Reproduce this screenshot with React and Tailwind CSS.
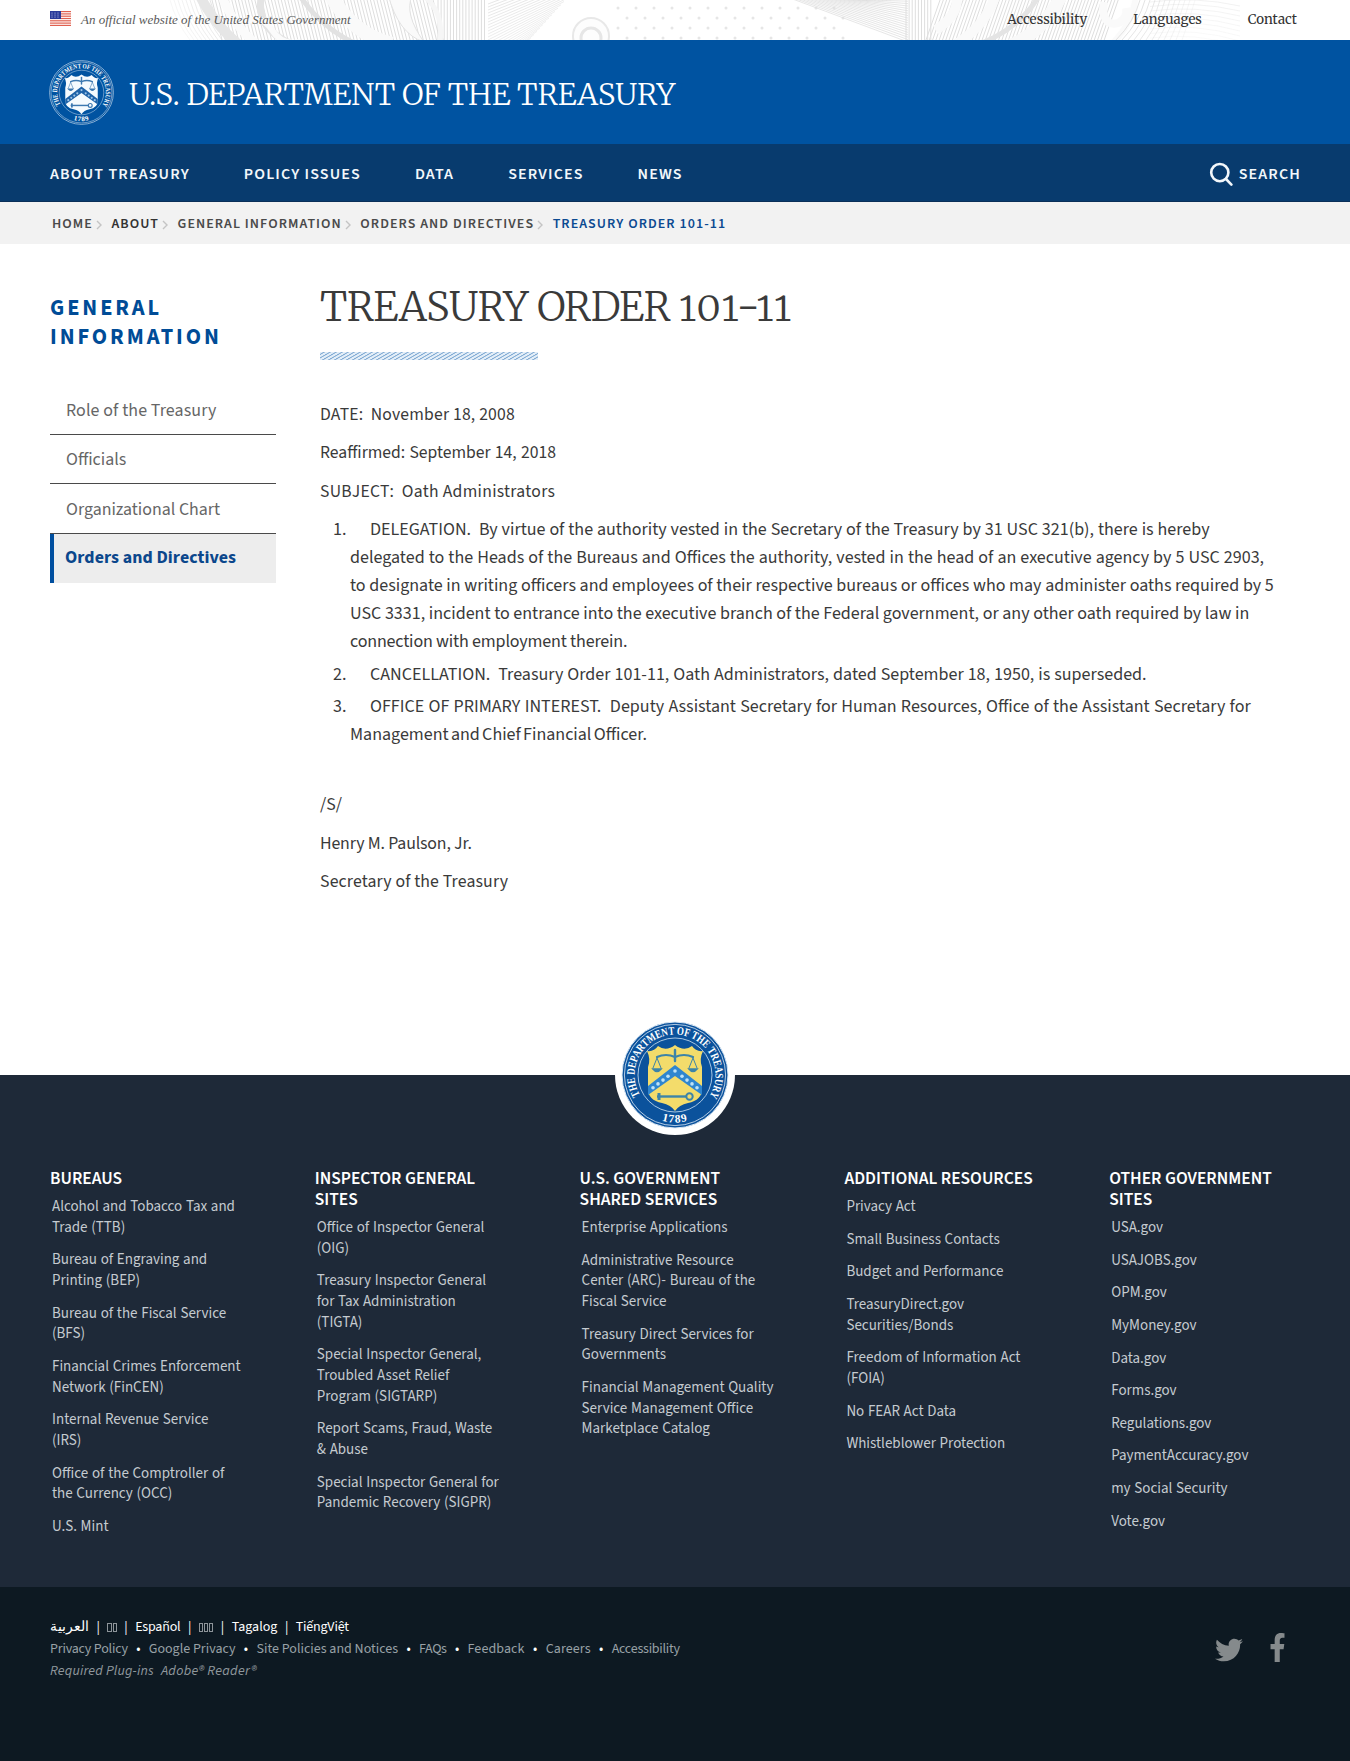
import { FaTwitter, FaFacebookF } from "react-icons/fa";

const NAV = ["ABOUT TREASURY", "POLICY ISSUES", "DATA", "SERVICES", "NEWS"];

const CRUMBS = [
  ["HOME", "text-[#4a4a4a]"],
  ["ABOUT", "text-[#333333]"],
  ["GENERAL INFORMATION", "text-[#4a4a4a]"],
  ["ORDERS AND DIRECTIVES", "text-[#4a4a4a]"],
];

/* Each order item: number, then its lines with their word spacing */
const ORDERS = [
  ["1.", [
    ["DELEGATION.\u00a0 By virtue of the authority vested in the Secretary of the Treasury by 31 USC 321(b), there is hereby", "[word-spacing:0.32px]"],
    ["delegated to the Heads of the Bureaus and Offices the authority, vested in the head of an executive agency by 5 USC 2903,", "[word-spacing:0.46px]"],
    ["to designate in writing officers and employees of their respective bureaus or offices who may administer oaths required by 5", "[word-spacing:0.05px]"],
    ["USC 3331, incident to entrance into the executive branch of the Federal government, or any other oath required by law in", ""],
    ["connection with employment therein.", "tracking-[-0.17px]"],
  ]],
  ["2.", [["CANCELLATION.\u00a0 Treasury Order 101-11, Oath Administrators, dated September 18, 1950, is superseded.", "[word-spacing:0.4px]"]]],
  ["3.", [
    ["OFFICE OF PRIMARY INTEREST.\u00a0 Deputy Assistant Secretary for Human Resources, Office of the Assistant Secretary for", "[word-spacing:0.65px]"],
    ["Management and Chief Financial Officer.", "[word-spacing:-1.3px]"],
  ]],
];

const COLUMNS = [
  {
    title: "BUREAUS",
    links: [
      "Alcohol and Tobacco Tax and\nTrade (TTB)",
      "Bureau of Engraving and\nPrinting (BEP)",
      "Bureau of the Fiscal Service\n(BFS)",
      "Financial Crimes Enforcement\nNetwork (FinCEN)",
      "Internal Revenue Service\n(IRS)",
      "Office of the Comptroller of\nthe Currency (OCC)",
      "U.S. Mint",
    ],
  },
  {
    title: "INSPECTOR GENERAL\nSITES",
    links: [
      "Office of Inspector General\n(OIG)",
      "Treasury Inspector General\nfor Tax Administration\n(TIGTA)",
      "Special Inspector General,\nTroubled Asset Relief\nProgram (SIGTARP)",
      "Report Scams, Fraud, Waste\n& Abuse",
      "Special Inspector General for\nPandemic Recovery (SIGPR)",
    ],
  },
  {
    title: "U.S. GOVERNMENT\nSHARED SERVICES",
    links: [
      "Enterprise Applications",
      "Administrative Resource\nCenter (ARC)- Bureau of the\nFiscal Service",
      "Treasury Direct Services for\nGovernments",
      "Financial Management Quality\nService Management Office\nMarketplace Catalog",
    ],
  },
  {
    title: "ADDITIONAL RESOURCES",
    links: [
      "Privacy Act",
      "Small Business Contacts",
      "Budget and Performance",
      "TreasuryDirect.gov\nSecurities/Bonds",
      "Freedom of Information Act\n(FOIA)",
      "No FEAR Act Data",
      "Whistleblower Protection",
    ],
  },
  {
    title: "OTHER GOVERNMENT\nSITES",
    links: [
      "USA.gov",
      "USAJOBS.gov",
      "OPM.gov",
      "MyMoney.gov",
      "Data.gov",
      "Forms.gov",
      "Regulations.gov",
      "PaymentAccuracy.gov",
      "my Social Security",
      "Vote.gov",
    ],
  },
];

const POLICIES = [
  ["Privacy Policy", "tracking-[-0.2px]"],
  ["Google Privacy", ""],
  ["Site Policies and Notices", ""],
  ["FAQs", "tracking-[-0.4px]"],
  ["Feedback", "tracking-[0.1px]"],
  ["Careers", "tracking-[0.1px]"],
  ["Accessibility", "tracking-[-0.25px]"],
];

/* Engraved banknote ornament behind the top bar */
function Guilloche() {
  const range = (n) => Array.from({ length: n }, (_, i) => i);
  return (
    <svg className="absolute inset-0" width="1350" height="40" viewBox="0 0 1350 40" fill="none" stroke="#dedede" strokeWidth="1">
      {range(11).map((i) => (
        <path key={"a" + i} d={`M${170 + i * 4} 0 Q ${176 + i * 4} 22 ${190 + i * 4} 40`} opacity={0.25 + i * 0.05} />
      ))}
      {range(68).map((i) => (
        <path key={"b" + i} d={`M${212 + i * 3.3} 0 L ${222 + i * 3.3} 40`} />
      ))}
      {range(16).map((i) => (
        <path key={"c" + i} d={`M${438 + i * 3.1} 0 V40`} />
      ))}
      <path d="M200 -4 Q214 24 238 44" stroke="#e6e6e6" strokeWidth="10" />
      <path d="M222 -4 Q232 24 256 44" stroke="#fbfbfb" strokeWidth="9" />
      <path d="M262 -6 C256 18 268 34 292 44" stroke="#e4e4e4" strokeWidth="7" />
      <path d="M246 22 Q262 14 272 30 T300 42" stroke="#fbfbfb" strokeWidth="6" />
      <path d="M330 -6 Q352 34 392 44" stroke="#fafafa" strokeWidth="14" />
      <path d="M300 -4 Q320 26 352 42" stroke="#e2e2e2" strokeWidth="5" />
      <path d="M388 -6 Q398 34 424 42 Q404 14 412 -4" fill="#fafafa" stroke="#e2e2e2" />
      <path d="M424 -4 Q444 12 440 42" stroke="#f6f6f6" strokeWidth="5" />
      {range(24).map((i) => (
        <path key={"d" + i} d={`M488 ${4 + i * 3} L ${600 - i * 3} ${-38 + i * 3.3}`} opacity={0.75 - i * 0.015} />
      ))}
      <circle cx="591" cy="36" r="18" fill="#fdfdfd" stroke="#e8e8e8" strokeWidth="2" />
      <circle cx="591" cy="38" r="10" stroke="#e6e6e6" strokeWidth="3" />
      <g fill="#e6e6e6" stroke="none">
        {range(4).map((r) =>
          range(13).map((c) => <circle key={r + "-" + c} cx={618 + c * 18 + (r % 2) * 9} cy={8 + r * 10} r="1.5" />)
        )}
      </g>
      {range(26).map((i) => (
        <path key={"e" + i} d={`M${790 + i * 4} ${-2 + i * 0.1} L 908 ${42 - i * 2.4}`} opacity="0.75" />
      ))}
      {range(9).map((i) => (
        <path key={"f" + i} d={`M${906 + i * 3.1} 0 V40`} />
      ))}
      {range(55).map((i) => (
        <path key={"g" + i} d={`M${940 + i * 3.3} 0 L ${926 + i * 3.3} 40`} />
      ))}
      <path d="M956 -4 Q960 14 936 30" stroke="#fafafa" strokeWidth="10" />
      <path d="M996 -6 Q986 26 956 44" stroke="#fafafa" strokeWidth="10" />
      <path d="M1040 -6 Q1020 30 974 46" stroke="#e4e4e4" strokeWidth="5" />
      <path d="M1062 -6 Q1046 30 1010 46" stroke="#f9f9f9" strokeWidth="13" />
      <path d="M1104 2 C1098 34 1130 26 1126 8" stroke="#fafafa" strokeWidth="8" />
      <path d="M1136 -6 Q1134 22 1112 44" stroke="#fafafa" strokeWidth="6" />
      {range(12).map((i) => (
        <path key={"h" + i} d={`M${1140 + i * 5} 0 Q ${1134 + i * 5} 22 ${1116 + i * 6} 40`} opacity={0.9 - i * 0.06} />
      ))}
      {range(9).map((i) => (
        <path key={"k" + i} d={`M1150 ${2 + i * 4.5} Q1195 ${i * 4.5 - 4} 1240 ${6 + i * 5}`} opacity={0.4 - i * 0.03} />
      ))}
    </svg>
  );
}

function Flag() {
  return (
    <svg width="21" height="15" viewBox="0 0 21 15">
      <rect width="21" height="15" fill="#fff" />
      {[0, 1, 2, 3, 4, 5, 6].map((i) => (
        <rect key={i} y={i * 2.3} width="21" height="1.2" fill="#e0604f" />
      ))}
      <rect width="11" height="8" fill="#2a3a9a" />
      {[2, 5, 8].map((x) => [2, 4, 6].map((y) => <circle key={x + "-" + y} cx={x} cy={y} r="0.55" fill="#c9d0f0" />))}
    </svg>
  );
}

/* Treasury seal: ring lettering around a shield with scales, chevron and key */
function Seal({ size, id, ring, shield, ink, chevron, stars }) {
  return (
    <svg width={size} height={size} viewBox="-54 -54 108 108">
      <defs>
        <path id={id + "-top"} d="M-35 20.2 A40.4 40.4 0 1 1 35 20.2" />
        <path id={id + "-bottom"} d="M-30 37 A47.6 47.6 0 0 0 30 37" />
      </defs>
      <circle r="53" fill={ring} stroke="#dce9f5" strokeWidth="1" />
      <circle r="50.6" fill="none" stroke="#dce9f5" strokeWidth="0.8" />
      <circle r="37" fill={ring} stroke="#b9d3ea" strokeWidth="0.9" />
      <g fill="#fff" fontFamily="'Liberation Serif', serif" fontWeight="700" fontSize="11.5">
        <text>
          <textPath href={"#" + id + "-top"} textLength="170" lengthAdjust="spacingAndGlyphs">THE DEPARTMENT OF THE TREASURY</textPath>
        </text>
        <text textAnchor="middle" letterSpacing="1">
          <textPath href={"#" + id + "-bottom"} startOffset="50%">1789</textPath>
        </text>
      </g>
      <path
        d="M-28 -24 Q-21 -23 -17 -29 Q-9 -23 0 -30 Q9 -23 17 -29 Q21 -23 28 -24 Q24 -16 27 -8 V14 Q27 25 13 28 Q4 30 0 36 Q-4 30 -13 28 Q-27 25 -27 14 V-8 Q-24 -16 -28 -24 Z"
        fill={shield}
      />
      <g fill="none" stroke={ink} strokeWidth="1.7" strokeLinecap="round">
        <path d="M-18 -18 Q-9 -22 0 -18 Q9 -22 18 -18" strokeWidth="2.2" />
        <path d="M0 -25 V-14" strokeWidth="2.4" />
        <path d="M-18 -17 L-22 -7 M-18 -17 L-14 -7 M18 -17 L14 -7 M18 -17 L22 -7" strokeWidth="1" />
        <path d="M-22 -6 Q-18 -1 -14 -6 Z M14 -6 Q18 -1 22 -6 Z" fill={ink} />
      </g>
      <path d="M-27 11 L0 -10 L27 11 V20 L0 1 L-27 20 Z" fill={chevron} />
      {[-22, -17, -12, -7, 0, 7, 12, 17, 22].map((x) => (
        <circle key={x} cx={x} cy={-4 + Math.abs(x) * 0.76} r="1.8" fill={stars} />
      ))}
      <g fill="none" stroke={ink} strokeWidth="2">
        <path d="M-18 21.5 H11" strokeWidth="2.4" />
        <path d="M-16 18 V25" strokeWidth="3" />
        <circle cx="14.5" cy="21.5" r="3.2" />
      </g>
    </svg>
  );
}

function Crumb({ label, tone }) {
  return (
    <span className={"flex items-center " + tone}>
      {label}
      <svg className="mt-0.5 mr-[9.5px] ml-[3px]" width="6" height="10" viewBox="0 0 6 10" fill="none" stroke="#c4c4c4" strokeWidth="1.4">
        <path d="M1 1 L5 5 L1 9" />
      </svg>
    </span>
  );
}

function EmptyGlyphs({ count, label }) {
  return (
    <span className="flex gap-px" aria-label={label}>
      {Array.from({ length: count }, (_, i) => (
        <span key={i} className="h-[9px] w-[4.2px] border border-[#8d9499]" />
      ))}
    </span>
  );
}

export default function App() {
  return (
    <div className="min-h-[1761px] w-[1350px] bg-white font-['Source_Sans_3','Noto_Sans_CJK_SC',sans-serif] text-[#3a3a3a]">
      <div className="relative flex h-10 justify-between overflow-hidden bg-white pr-[53px] pl-[50px]">
        <Guilloche />
        <div className="relative flex items-start gap-[10px] pt-[11px]">
          <Flag />
          <span className="font-['Liberation_Serif',serif] text-[13px] leading-[18px] text-[#5a5a5a] italic">
            An official website of the United States Government
          </span>
        </div>
        <div className="relative flex gap-[46px] pt-[10px] font-['Merriweather','Liberation_Serif',serif] text-[13.3px] leading-5 text-[#333333]">
          <a>Accessibility</a>
          <a className="tracking-[-0.1px]">Languages</a>
          <a>Contact</a>
        </div>
      </div>

      <header className="flex h-[104px] items-center gap-[15px] bg-[#0053a1] pl-[49px]">
        <Seal size={65} id="header-seal" ring="#0053a1" shield="#f4fafe" ink="#3c78b0" chevron="#1d62a8" stars="#9cc3e6" />
        <h2 className="pt-[3px] font-['Merriweather','Liberation_Serif',serif] text-[30px] leading-10 font-light tracking-[-0.17px] text-white">
          U.S. DEPARTMENT OF THE TREASURY
        </h2>
      </header>

      <nav className="flex h-[58px] items-center justify-between border-b border-[#0a2f58] bg-[#083b6e] pr-[49px] pl-[50px] text-base font-semibold tracking-[1.13px] text-[#f2f7fb]">
        <div className="flex gap-[54px] pt-[2px]">
          {NAV.map((n) => (
            <a key={n}>{n}</a>
          ))}
        </div>
        <div className="flex items-center gap-[6px] pt-[2px]">
          <svg width="24" height="24" viewBox="0 0 24 24" fill="none" stroke="#f2f7fb" strokeWidth="2.6" strokeLinecap="round">
            <circle cx="10.8" cy="10.6" r="8.6" />
            <path d="M17 17 L22.4 22.6" />
          </svg>
          <span>SEARCH</span>
        </div>
      </nav>

      <div className="flex h-[42px] items-center bg-[#f2f2f2] pt-px pl-[52px] text-sm font-semibold tracking-[1.05px]">
        {CRUMBS.map(([label, tone]) => (
          <Crumb key={label} label={label} tone={tone} />
        ))}
        <span className="text-[#0b4a91]">TREASURY ORDER 101-11</span>
      </div>

      <div className="flex h-[831px] gap-11 pl-[50px]">
        <aside className="w-[226px] pt-[50px]">
          <h3 className="text-[22.4px] leading-[29px] font-bold tracking-[2.9px] text-[#004c97]">
            GENERAL
            <br />
            INFORMATION
          </h3>
          <ul className="mt-[33px] text-[17.9px] text-[#666666]">
            {[
              ["Role of the Treasury", "tracking-[0.12px]"],
              ["Officials", ""],
              ["Organizational Chart", ""],
            ].map(([t, c]) => (
              <li key={t} className={"flex h-[49.5px] items-center border-b border-[#4a4a4a] pt-1 pl-4 " + c}>
                {t}
              </li>
            ))}
            <li className="flex h-[49px] items-center border-l-4 border-[#004f9f] bg-[#ededed] pt-px pl-[11px] font-bold tracking-[0.07px] text-[#0b478c]">
              Orders and Directives
            </li>
          </ul>
        </aside>

        <main className="w-[970px] pt-[39px] text-[17.6px] leading-7">
          <h1 className="font-['Merriweather','Liberation_Serif',serif] text-[40px] leading-[48px] font-light tracking-[-0.6px] oldstyle-nums">
            TREASURY ORDER <span className="tracking-[1.9px]">101-11</span>
          </h1>
          <div className="mt-[21px] h-2 w-[218px] bg-[repeating-linear-gradient(150deg,#e3eef8_0px,#e3eef8_1.4px,#86aed5_1.9px,#86aed5_2.4px,#e3eef8_3px)]" />
          <div className="mt-[41px] flex flex-col gap-[10.4px]">
            <p className="tracking-[0.2px]">DATE:&nbsp; November 18, 2008</p>
            <p className="[word-spacing:0.7px]">Reaffirmed: September 14, 2018</p>
            <p className="tracking-[0.31px]">SUBJECT:&nbsp; Oath Administrators</p>
          </div>
          <ol className="mt-[10.4px] flex flex-col gap-[4.6px] text-[18px]">
            {ORDERS.map(([n, lines]) => (
              <li key={n} className="flex">
                <span className="w-[30px] shrink-0 pl-[13px]">{n}</span>
                <p className="whitespace-pre">
                  {lines.map(([t, c], i) => (
                    <span key={t} className={"block " + (i === 0 ? "pl-5 " : "") + c}>
                      {t}
                    </span>
                  ))}
                </p>
              </li>
            ))}
          </ol>
          <div className="mt-[42px] flex flex-col gap-[10.4px] text-[17.8px]">
            <p>/S/</p>
            <p className="tracking-[-0.15px]">Henry M. Paulson, Jr.</p>
            <p className="tracking-[0.13px]">Secretary of the Treasury</p>
          </div>
        </main>
      </div>

      <footer>
        <section className="relative h-[512px] bg-[#1e2938] pt-[93px] pl-[50px]">
          <div className="absolute -top-[60px] left-[615px] flex size-[120px] items-center justify-center rounded-full bg-white">
            <Seal size={108} id="footer-seal" ring="#0b529c" shield="#f3dc6b" ink="#3d84a8" chevron="#2f86cf" stars="#bfe3f7" />
          </div>
          <div className="grid grid-cols-5 gap-x-[44.8px] pr-[20.8px]">
            {COLUMNS.map((c) => (
              <div key={c.title}>
                <h4 className="text-[17.5px] leading-[21px] font-semibold whitespace-pre text-white">{c.title}</h4>
                <ul className="mt-2 pl-[2px]">
                  {c.links.map((l) => (
                    <li key={l} className="mb-[11.95px] text-[15px] leading-[20.7px] whitespace-pre text-[#c5cbd0] [word-spacing:0.7px]">
                      {l}
                    </li>
                  ))}
                </ul>
              </div>
            ))}
          </div>
        </section>

        <section className="flex h-[174px] justify-between bg-[#0d1922] pt-[29px] pr-[58px] pl-[50px] text-sm leading-[22px]">
          <div>
            <div className="flex items-center gap-[7.5px] text-white">
              <span>العربية</span>
              <span>|</span>
              <EmptyGlyphs count={2} label="中文" />
              <span>|</span>
              <span className="tracking-[-0.2px]">Español</span>
              <span>|</span>
              <EmptyGlyphs count={3} label="한국어" />
              <span>|</span>
              <span>Tagalog</span>
              <span>|</span>
              <span className="tracking-[-0.2px]">TiếngViệt</span>
            </div>
            <div className="flex text-[#98a1a6]">
              {POLICIES.map(([p, c], i) => (
                <span key={p} className="flex">
                  {i > 0 && <span className="w-[21px] text-center text-white">•</span>}
                  <a className={c}>{p}</a>
                </span>
              ))}
            </div>
            <div className="flex gap-[7px] text-[#8f979c] italic">
              <span className="tracking-[0.2px]">Required Plug-ins</span>
              <span className="tracking-[0.3px]">Adobe® Reader®</span>
            </div>
          </div>
          <div className="flex gap-[20px] pt-[17px] text-[#858a8c]">
            <FaTwitter size={28} className="mt-[3px]" />
            <FaFacebookF size={29} className="scale-x-90" />
          </div>
        </section>
      </footer>
    </div>
  );
}
